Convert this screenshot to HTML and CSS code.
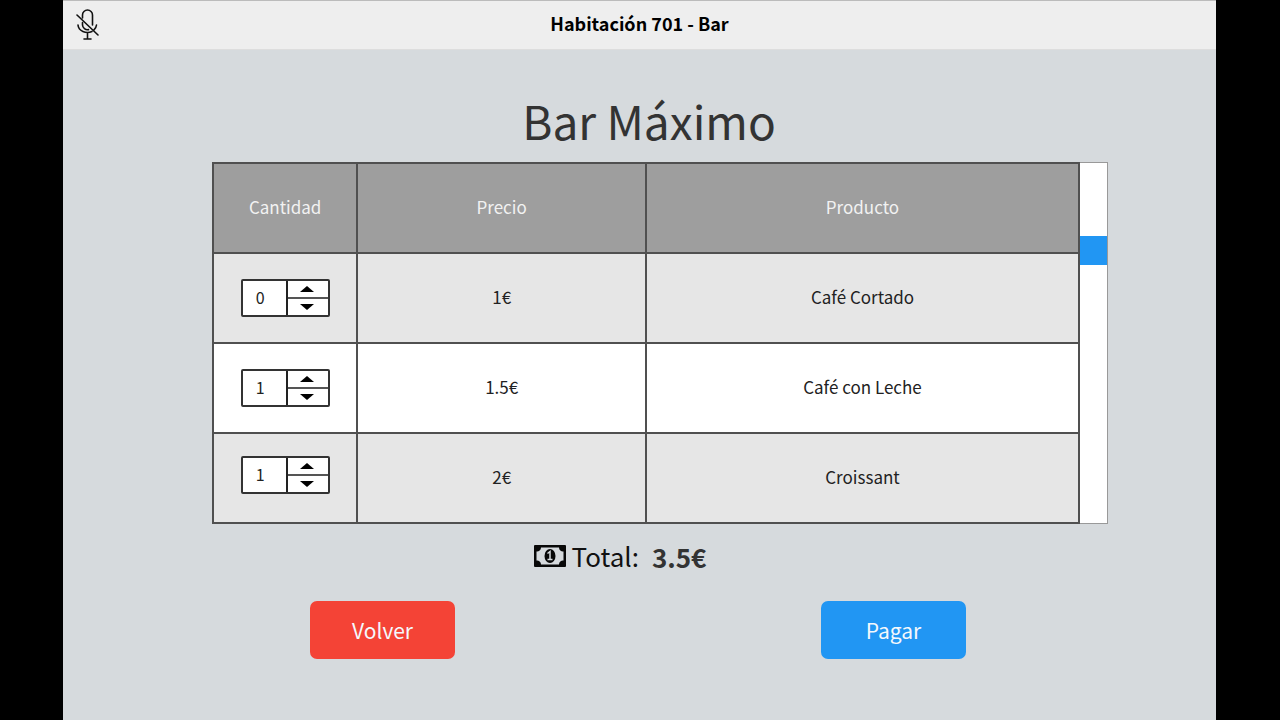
FILE: index.html
```html
<!DOCTYPE html>
<html lang="es">
<head>
<meta charset="utf-8">
<meta name="viewport" content="width=device-width, initial-scale=1">
<title>Habitación 701 - Bar</title>
<link rel="stylesheet" href="styles.css">
</head>
<body>
<div class="app">
  <header class="topbar">
    <button class="mic" type="button" aria-label="Micrófono silenciado">
      <svg viewBox="0 0 24 34" width="24" height="34" fill="none" stroke="#111" stroke-width="1.6" stroke-linecap="round">
        <path d="M7.500 10V7a5 5 0 0 1 10 0V17M7.500 14.500v2.500a5 5 0 0 0 6 4.600"/>
        <path d="M3 17a9.500 8 0 0 0 14 6.500M19 21.800a9 8 0 0 0 2.500-4.800M12.500 25V31M9 31h7M2 7l21 20"/>
      </svg>
    </button>
    <h1 class="topbar-title">Habitación 701 - Bar</h1>
  </header>
  <main class="content">
    <h2 class="title">Bar Máximo</h2>
    <div class="panel">
      <table class="products">
        <thead>
          <tr><th class="col-qty">Cantidad</th><th class="col-price">Precio</th><th>Producto</th></tr>
        </thead>
        <tbody>
          <tr>
            <td class="qty-cell"><div class="spinner"><input class="qty" type="text" inputmode="numeric" value="0" aria-label="Cantidad de Café Cortado"><div class="steps"><button class="step" type="button" aria-label="Más"><svg width="14" height="6"><path d="M0 6L7 0l7 6z"/></svg></button><button class="step" type="button" aria-label="Menos"><svg width="14" height="6"><path d="M0 0l7 6 7-6z"/></svg></button></div></div></td>
            <td>1€</td><td>Café Cortado</td>
          </tr>
          <tr>
            <td class="qty-cell"><div class="spinner"><input class="qty" type="text" inputmode="numeric" value="1" aria-label="Cantidad de Café con Leche"><div class="steps"><button class="step" type="button" aria-label="Más"><svg width="14" height="6"><path d="M0 6L7 0l7 6z"/></svg></button><button class="step" type="button" aria-label="Menos"><svg width="14" height="6"><path d="M0 0l7 6 7-6z"/></svg></button></div></div></td>
            <td>1.5€</td><td>Café con Leche</td>
          </tr>
          <tr>
            <td class="qty-cell raised"><div class="spinner"><input class="qty" type="text" inputmode="numeric" value="1" aria-label="Cantidad de Croissant"><div class="steps"><button class="step" type="button" aria-label="Más"><svg width="14" height="6"><path d="M0 6L7 0l7 6z"/></svg></button><button class="step" type="button" aria-label="Menos"><svg width="14" height="6"><path d="M0 0l7 6 7-6z"/></svg></button></div></div></td>
            <td>2€</td><td>Croissant</td>
          </tr>
        </tbody>
      </table>
      <div class="scroll"><div class="thumb"></div></div>
    </div>
    <p class="total">
      <svg class="cash" viewBox="0 0 32 22" width="32" height="22" aria-hidden="true">
        <rect width="32" height="22" rx="1" fill="#080808"/>
        <path d="M7 2.500h18a4 4 0 0 0 4.500 4v9a4 4 0 0 0-4.500 4H7a4 4 0 0 0-4.500-4v-9a4 4 0 0 0 4.500-4z" fill="#d6dadd"/>
        <ellipse cx="16" cy="11" rx="5.500" ry="7" fill="#080808"/>
        <path d="M13.500 8.500l2.500-2v8M13.500 14.500h5" fill="none" stroke="#d6dadd" stroke-width="1.500"/>
      </svg>
      <span class="total-label">Total:</span>
      <strong class="amount">3.5€</strong>
    </p>
    <div class="actions">
      <button class="btn btn-back" type="button">Volver</button>
      <button class="btn btn-pay" type="button">Pagar</button>
    </div>
  </main>
</div>
</body>
</html>
```
FILE: styles.css
```css
* { box-sizing: border-box; }
body {
  margin: 0;
  background: #000;
  font-family: "Noto Sans CJK SC", "Noto Sans", sans-serif;
  color: #222;
}
button, input { font: inherit; color: inherit; }
.app {
  min-height: 100vh;
  margin: 0 64px 0 63px;
  background: #d6dadd;
}
.topbar {
  display: grid;
  grid-template-columns: 48px 1fr 48px;
  align-items: center;
  height: 50px;
  background: #eee;
  border-top: 1px solid #bbb;
  border-bottom: 1px solid #ddd;
}
.mic {
  display: flex;
  justify-content: center;
  padding: 0;
  border: 0;
  background: none;
}
.topbar-title {
  margin: 0;
  padding-bottom: 4px;
  font-size: 18px;
  line-height: 24px;
  font-weight: 700;
  text-align: center;
  color: #000;
}
.content { padding: 32px 108px 0 149px; }
.title {
  margin: 0 0 4px;
  padding-right: 22px;
  font-size: 46px;
  line-height: 76px;
  font-weight: 400;
  text-align: center;
  color: #333;
}
.panel { display: flex; }
.products {
  flex: 1;
  table-layout: fixed;
  border-collapse: collapse;
  font-size: 17px;
  line-height: 24px;
  text-align: center;
}
.products th, .products td {
  height: 90px;
  padding: 0 0 3px;
  border: 2px solid #505050;
  font-weight: 400;
}
.products th { background: #9e9e9e; color: #f2f2f2; }
.products td { background: #e6e6e6; }
.products tr:nth-child(even) td { background: #fff; }
.col-qty { width: 16.6667%; }
.col-price { width: 33.3333%; }
.products .qty-cell { padding-bottom: 0; }
.products .raised { padding-bottom: 6px; }
.spinner {
  display: flex;
  width: 89px;
  height: 38px;
  margin: 0 auto;
  border: 2px solid #333;
  border-radius: 2px;
  background: #fff;
}
.qty {
  width: 45px;
  padding: 0 8px 2px 0;
  border: 0;
  border-right: 2px solid #222;
  border-radius: 0;
  background: none;
  font-size: 16px;
  text-align: center;
}
.steps { flex: 1; display: flex; flex-direction: column; }
.step {
  flex: 1;
  display: flex;
  align-items: center;
  justify-content: center;
  padding: 0 2px 0 0;
  border: 0;
  background: none;
}
.step + .step { border-top: 2px solid #555; }
.scroll {
  width: 28px;
  padding-top: 73px;
  background: #fff;
  border: 1px solid #999;
  border-left: 0;
}
.thumb { height: 29px; background: #2196f3; }
.total {
  display: flex;
  align-items: center;
  margin: 0;
  padding: 10px 80px 0 0;
  justify-content: center;
  font-size: 26px;
  line-height: 40px;
}
.total-label { margin: 0 13px 0 6px; color: #111; }
.amount { padding-top: 3px; color: #333; }
.actions {
  display: flex;
  justify-content: space-between;
  padding: 24px 142px 0 98px;
}
.btn {
  width: 145px;
  height: 58px;
  border: 0;
  border-radius: 7px;
  font-size: 21px;
  color: #f4f8fc;
}
.btn-back { background: #f44336; }
.btn-pay { background: #2196f3; }
```
